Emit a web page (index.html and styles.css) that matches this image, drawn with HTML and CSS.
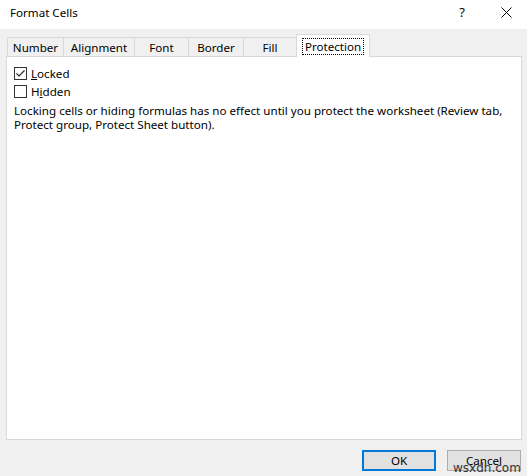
FILE: index.html
```html
<!DOCTYPE html>
<html>
<head>
<meta charset="utf-8">
<link rel="stylesheet" href="styles.css">
</head>
<body>
<div class="dialog">
  <div class="titlebar">
    <span class="title">Format Cells</span>
    <span class="help">?</span>
    <span class="close"><svg width="11" height="11" viewBox="0 0 11 11"><path d="M0.5 0.5L10.5 10.5M10.5 0.5L0.5 10.5" stroke="#000" stroke-width="1" fill="none"/></svg></span>
  </div>
  <div class="body">
    <div class="tabs">
      <div class="tab">Number</div>
      <div class="tab">Alignment</div>
      <div class="tab">Font</div>
      <div class="tab">Border</div>
      <div class="tab">Fill</div>
      <div class="tab active"><span class="focus">Protection</span></div>
    </div>
    <div class="panel">
      <label class="check">
        <span class="box"><svg width="11" height="11" viewBox="0 0 11 11"><path d="M1.5 5.5L4 8L9.5 2.5" stroke="#222" stroke-width="1.1" fill="none"/></svg></span>
        <span><u>L</u>ocked</span>
      </label>
      <label class="check">
        <span class="box"></span>
        <span>H<u>i</u>dden</span>
      </label>
      <p class="note">Locking cells or hiding formulas has no effect until you protect the worksheet (Review tab, Protect group, Protect Sheet button).</p>
    </div>
    <div class="footer">
      <button class="btn default">OK</button>
      <button class="btn">Cancel</button>
    </div>
  </div>
  <div class="watermark">wsxdn.com</div>
</div>
</body>
</html>
```

FILE: styles.css
```css
html, body {
  margin: 0;
  padding: 0;
}
body {
  width: 527px;
  height: 476px;
  background: #f0f0f0;
  font-family: "Noto Sans", "Open Sans", sans-serif;
  font-size: 11.6px;
  color: #000;
  overflow: hidden;
}
.dialog {
  position: relative;
  width: 527px;
  height: 476px;
}
.titlebar {
  height: 29px;
  background: #ffffff;
  display: flex;
  align-items: center;
  padding-left: 10px;
  box-sizing: border-box;
}
.title {
  flex: 1;
  margin-top: -5px;
}
.help {
  width: 14px;
  text-align: center;
  margin-right: 32px;
  margin-top: -5px;
  font-size: 13px;
}
.close {
  width: 11px;
  height: 11px;
  margin-right: 15px;
  margin-top: -5px;
  display: flex;
}
.body {
  padding: 0 6px;
}
.tabs {
  display: flex;
  align-items: flex-end;
  height: 28px;
  padding-left: 1px;
  position: relative;
  z-index: 1;
  margin-bottom: -1px;
}
.tab {
  height: 19px;
  box-sizing: border-box;
  border: 1px solid #d9d9d9;
  border-bottom: none;
  border-left: none;
  padding: 0;
  display: flex;
  align-items: center;
  justify-content: center;
  background: #f0f0f0;
  margin-bottom: 1px;
}
.tab:first-child {
  border-left: 1px solid #d9d9d9;
}
.tab:nth-child(1) { width: 57px; }
.tab:nth-child(2) { width: 71px; }
.tab:nth-child(3) { width: 54px; }
.tab:nth-child(4) { width: 55px; }
.tab:nth-child(5) { width: 53px; }
.tab.active {
  width: 74px;
  height: 23px;
  background: #ffffff;
  border-left: 1px solid #d9d9d9;
  margin-left: -1px;
  margin-bottom: 0;
  padding: 1px 3px 0;
}
.focus {
  border: 1px dotted #000;
  padding: 0 2px;
  line-height: 15px;
}
.panel {
  height: 384px;
  box-sizing: border-box;
  background: #ffffff;
  border: 1px solid #d9d9d9;
  width: 516px;
  padding: 7px 7px 0;
}
.check {
  display: flex;
  align-items: center;
  height: 18px;
  gap: 4px;
}
.box {
  width: 13px;
  height: 13px;
  box-sizing: border-box;
  border: 1px solid #333333;
  background: #fff;
  display: flex;
  align-items: center;
  justify-content: center;
}
.note {
  margin: 4px 0 0;
  line-height: 14px;
}
.footer {
  display: flex;
  justify-content: flex-end;
  gap: 11px;
  padding-top: 10px;
}
.btn {
  width: 74px;
  height: 21px;
  font-family: inherit;
  font-size: 11.6px;
  background: #e1e1e1;
  border: 1px solid #adadad;
  padding: 0;
  color: #000;
}
.btn.default {
  border: 2px solid #0078d7;
}
.watermark {
  position: absolute;
  left: 453px;
  top: 462px;
  font-size: 12px;
  line-height: 12px;
  color: #333;
  font-family: "DejaVu Sans", sans-serif;
}
```
